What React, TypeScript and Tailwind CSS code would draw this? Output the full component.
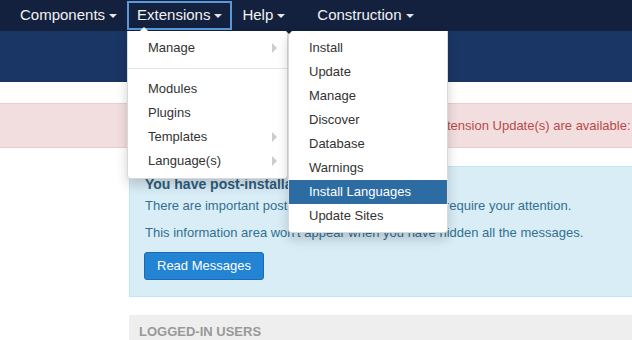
import { ReactNode } from 'react'

const Caret = () => (
  <span className="ml-[4px] inline-block w-0 h-0 border-x-[4px] border-x-transparent border-t-[4px] border-t-[#e6e6e6] align-middle" />
)

const SubCaret = () => (
  <span className="absolute right-[10px] top-[7px] w-0 h-0 border-y-[5px] border-y-transparent border-l-[5px] border-l-[#cccccc]" />
)

function NavItem({ label, active, className = '' }: { label: string; active?: boolean; className?: string }) {
  return (
    <div
      className={
        'h-[29px] flex items-center px-[10px] text-[15px] text-[#f2f2f2] ' +
        (active ? 'outline outline-2 -outline-offset-2 outline-[#5a9ad8] ' : '') +
        className
      }
    >
      {label}
      <Caret />
    </div>
  )
}

function MenuItem({ children, sub, active }: { children: ReactNode; sub?: boolean; active?: boolean }) {
  return (
    <div
      className={
        'relative h-[24px] leading-[24px] pl-[20px] text-[13px] ' +
        (active ? 'bg-[#2d6ca2] text-white' : 'text-[#333333]')
      }
    >
      {children}
      {sub && <SubCaret />}
    </div>
  )
}

export default function App() {
  return (
    <div className="relative w-[632px] h-[340px] overflow-hidden bg-white font-['Liberation_Sans',Arial,sans-serif]">
      {/* Top navbar */}
      <div className="h-[31px] bg-[#13213f] flex items-start pt-[1px] pl-[10px]">
        <NavItem label="Components" />
        <NavItem label="Extensions" active />
        <NavItem label="Help" />
        <NavItem label="Construction" className="ml-[12px]" />
      </div>

      {/* Header strip */}
      <div className="h-[51px] bg-[#1a3665]" />

      {/* Update alert */}
      <div className="mt-[21px] h-[45px] flex items-center bg-[#f2dede] border-y border-[#ebccd1] text-[13px] text-[#b94a48] whitespace-nowrap pl-[421px]">
        2 Extension Update(s) are available:
      </div>

      {/* Post-install messages */}
      <div className="mt-[18px] ml-[129px] w-[560px] bg-[#d9edf7] border border-[#bce8f1] pt-[7px] pb-[16px] px-[15px] text-[#31708f]">
        <div className="text-[14px] font-bold leading-[20px] text-[#2f5d7e]">You have post-installation messages</div>
        <p className="mt-[3px] text-[13px] leading-[18px]">
          There are important post-installation messages that require your attention.
        </p>
        <p className="mt-[9px] text-[13px] leading-[18px]">
          This information area won't appear when you have hidden all the messages.
        </p>
        <button className="mt-[10px] h-[28px] px-[12px] rounded-[3px] bg-[#2384d3] border border-[#1a6bb0] text-white text-[13px] -ml-px">
          Read Messages
        </button>
      </div>

      {/* Logged-in users */}
      <div className="mt-[18px] ml-[129px] w-[560px] h-[40px] bg-[#eeeeee] pt-[8px] px-[10px] text-[13px] font-bold leading-[18px] text-[#999999]">
        LOGGED-IN USERS
      </div>

      {/* Extensions dropdown */}
      <div className="absolute left-[127px] top-[31px] w-[161px] bg-white border border-black/15 border-t-0 rounded-b-[4px] shadow-[0_6px_12px_rgba(0,0,0,0.175)] pt-[5px] pb-[5px]">
        <span className="absolute left-[12px] -top-[4px] w-0 h-0 border-x-[4px] border-x-transparent border-b-[4px] border-b-white" />
        <MenuItem sub>Manage</MenuItem>
        <div className="my-[8px] h-px bg-[#e5e5e5]" />
        <MenuItem>Modules</MenuItem>
        <MenuItem>Plugins</MenuItem>
        <MenuItem sub>Templates</MenuItem>
        <MenuItem sub>Language(s)</MenuItem>
      </div>

      {/* Manage submenu */}
      <div className="absolute left-[288px] top-[31px] w-[160px] bg-white border border-black/15 border-t-0 rounded-b-[4px] shadow-[0_6px_12px_rgba(0,0,0,0.175)] pt-[5px] pb-[4px]">
        <span className="absolute -left-[3px] top-0 w-0 h-0 border-x-[3px] border-x-transparent border-t-[3px] border-t-[#13213f]" />
        <MenuItem>Install</MenuItem>
        <MenuItem>Update</MenuItem>
        <MenuItem>Manage</MenuItem>
        <MenuItem>Discover</MenuItem>
        <MenuItem>Database</MenuItem>
        <MenuItem>Warnings</MenuItem>
        <MenuItem active>Install Languages</MenuItem>
        <MenuItem>Update Sites</MenuItem>
      </div>
    </div>
  )
}
